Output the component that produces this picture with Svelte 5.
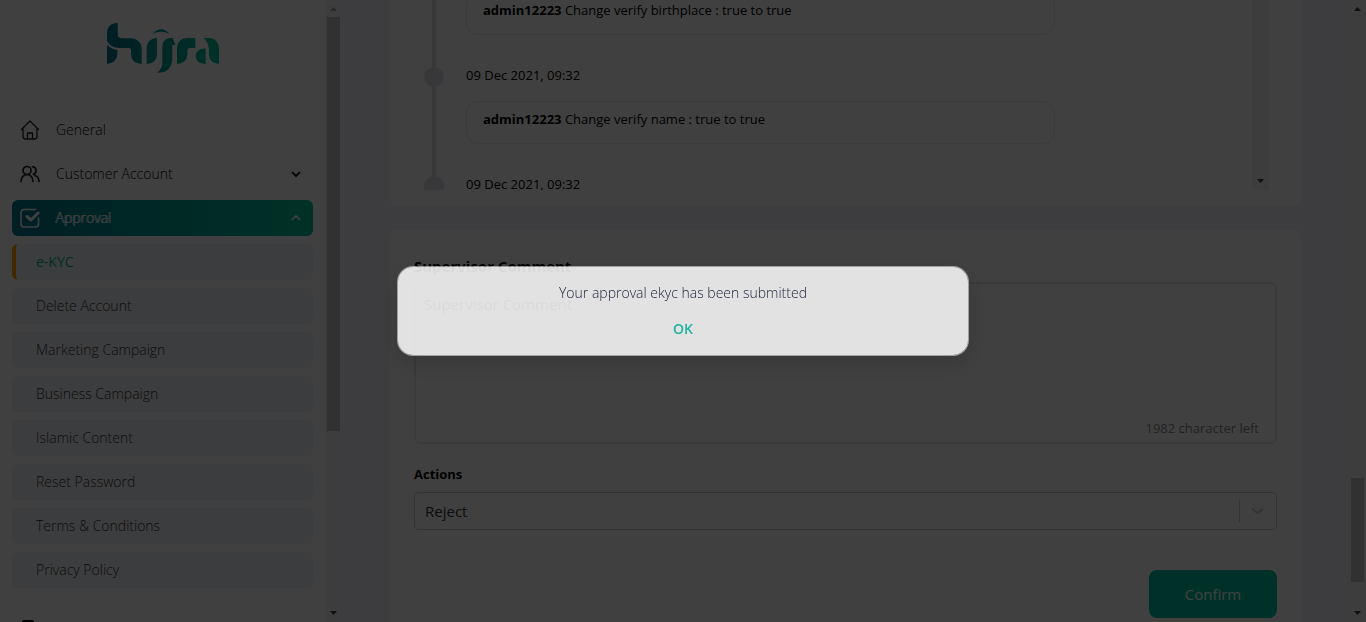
<script>
  const submenu = [
    'e-KYC',
    'Delete Account',
    'Marketing Campaign',
    'Business Campaign',
    'Islamic Content',
    'Reset Password',
    'Terms & Conditions',
    'Privacy Policy'
  ];
  const history = [
    { date: '09 Dec 2021, 09:32', user: 'admin12223', text: 'Change verify name : true to true' },
    { date: '09 Dec 2021, 09:32' }
  ];
  let comment = $state('Supervisor Comment');
  let action = $state('Reject');
  let open = $state(true);
  const left = $derived(2000 - comment.length);
</script>

{#snippet rail(before, size, atTop)}
  <div class="rail" aria-hidden="true">
    <svg class:dim={atTop} width="17" height="17" viewBox="0 0 17 17"><path d="M5 11h7L8.500 7z" /></svg>
    <div class="track">
      <div style="flex: {before} 0 0px"></div>
      <div class="thumb" style="flex: {size} 0 0px"></div>
      <div style="flex: {588 - before - size} 0 0px"></div>
    </div>
    <svg width="17" height="17" viewBox="0 0 17 17"><path d="M5 6h7l-3.500 4z" /></svg>
  </div>
{/snippet}

<div class="shell">
  <aside>
    <nav>
      <svg class="logo" width="112" height="50" viewBox="0 0 336 150" role="img" aria-label="hijra">
        <defs>
          <linearGradient id="brand" x1="0" y1="0" x2="336" y2="0" gradientUnits="userSpaceOnUse">
            <stop offset="0" stop-color="#00758c" />
            <stop offset="1" stop-color="#00c49a" />
          </linearGradient>
        </defs>
        <g fill="url(#brand)">
          <path d="M0 32Q0 0 32 0V34Q32 46 46 46H70Q104 48 104 80V123Q72 121 72 92V82Q72 75 64 75H38Q8 73 0 53Z" />
          <path d="M0 65Q10 77 31 81V94Q29 121 0 123Z" />
          <path d="M119 123V73Q121 47 150 45V95Q148 121 119 123Z" />
          <path d="M136 33Q162 4 188 33Q162 19 136 33Z" />
          <path d="M166 70Q167 46 190 45H197L205 66H196V110Q192 150 150 149Q166 139 166 118Z" />
          <path d="M210 123V73Q212 47 240 45H265V75H250Q241 75 241 84V95Q239 121 210 123Z" />
          <path d="M290 45H308Q335 48 336 78V123Q306 121 306 94V78Q303 57 290 45Z" />
          <path d="M296 76V123Q266 121 266 99Q267 78 296 76Z" />
        </g>
      </svg>

      <a class="item" href="#general">
        <svg width="20" height="20" viewBox="0 0 20 20" fill="none" stroke="currentColor" stroke-width="1.300" stroke-linejoin="round" stroke-linecap="round">
          <path d="M3 8v8.500a2.500 2.500 0 0 0 2.500 2.500h9a2.500 2.500 0 0 0 2.500-2.500V8M1.500 9.500 10 1l8.500 8.500M7.500 19v-6h5v6" />
        </svg>
        <span>General</span>
      </a>
      <a class="item" href="#customer">
        <svg width="20" height="20" viewBox="0 0 20 20" fill="none" stroke="currentColor" stroke-width="1.700" stroke-linecap="round">
          <circle cx="7" cy="6.500" r="4" />
          <path d="M1 17.500c0-4 2.500-7 6-7s6 3 6 7M12.500 2.600a4 4 0 0 1 1 7.700M15 11.500c2.500 1 4 3 4 6" />
        </svg>
        <span>Customer Account</span>
        <svg class="caret" width="10" height="8" viewBox="0 0 10 8" fill="none" stroke="currentColor" stroke-width="2"><path d="M1 2l4 4 4-4" /></svg>
      </a>
      <a class="item active" href="#approval">
        <svg width="20" height="20" viewBox="0 0 20 20" fill="none" stroke="currentColor" stroke-linecap="round" stroke-linejoin="round">
          <path stroke-width="1.600" d="M15.500 1.500H4A3 3 0 0 0 1 4.500v11.500a3 3 0 0 0 3 3h11.500a3 3 0 0 0 3-3V10" />
          <path stroke-width="3" d="M7 8.500l4 3.500 7-7" />
        </svg>
        <span>Approval</span>
        <svg class="caret" width="10" height="8" viewBox="0 0 10 8" fill="none" stroke="currentColor" stroke-width="1.600"><path d="M1 6l4-4 4 4" /></svg>
      </a>
      {#each submenu as name, i}
        <a class="sub" class:current={i === 0} href="#{i}">{name}</a>
      {/each}
      <a class="item next" href="#more" aria-label="More">
        <svg width="20" height="20" viewBox="0 0 20 20"><rect x="2" width="12" height="20" rx="2" /></svg>
      </a>
    </nav>
    {@render rail(0, 414, true)}
  </aside>

  <main>
    <section class="card log">
      <div class="timeline">
        <div class="bubble"><b>admin12223</b> Change verify birthplace : true to true</div>
        {#each history as h}
          <div class="entry">
            <i class="dot"></i>
            <time>{h.date}</time>
            {#if h.text}
              <div class="bubble"><b>{h.user}</b> {h.text}</div>
            {/if}
          </div>
        {/each}
      </div>
      <div class="rail" aria-hidden="true">
        <div class="track"></div>
        <svg width="17" height="17" viewBox="0 0 17 17"><path d="M5 6h7l-3.500 4z" /></svg>
      </div>
    </section>

    <section class="card form">
      <label class="title" for="comment">Supervisor Comment</label>
      <div class="box">
        <textarea id="comment" bind:value={comment}></textarea>
        <span class="count">{left} character left</span>
      </div>
      <label for="action">Actions</label>
      <div class="select">
        <select id="action" bind:value={action}>
          <option>Reject</option>
          <option>Approve</option>
        </select>
        <svg width="38" height="22" viewBox="0 0 38 22" fill="none" stroke="#ccc"><path d="M.500 0v22" /><path stroke-width="2" d="M13 8.500l5.500 5 5.500-5" /></svg>
      </div>
      <button class="confirm">Confirm</button>
    </section>
  </main>
  {@render rail(461, 104, false)}
</div>

{#if open}
  <div class="overlay">
    <div class="dialog" role="dialog" aria-modal="true" aria-labelledby="message">
      <p id="message">Your approval ekyc has been submitted</p>
      <button onclick={() => (open = false)}>OK</button>
    </div>
  </div>
{/if}

<style>
  :global(body) { margin: 0; overflow: hidden; }
  .shell, .overlay, .shell *, .overlay * { box-sizing: border-box; }
  .shell {
    display: flex;
    height: 100vh;
    overflow: hidden;
    background: #f4f4f9;
    font: 13px/20px "Open Sans", "Noto Sans", sans-serif;
    color: #000;
  }
  aside { display: flex; flex: 0 0 342px; background: #fff; }
  nav {
    flex: 1;
    display: flex;
    flex-direction: column;
    gap: 8px;
    padding: 23px 12px 0;
    overflow: hidden;
    font-size: 14px;
    font-weight: 300;
  }
  nav > * { flex-shrink: 0; }
  .logo { align-self: center; margin-bottom: 31px; }
  a { color: inherit; text-decoration: none; }
  .item {
    display: flex;
    align-items: center;
    gap: 16px;
    height: 36px;
    padding: 0 12px 0 8px;
    border-radius: 6px;
  }
  .item svg { color: #222; }
  .caret { margin-left: auto; }
  .active, .active svg { color: #fff; }
  .active {
    text-shadow: -1px 0 currentColor;
    background: linear-gradient(90deg, #00788f, #00c49a);
  }
  .sub {
    height: 36px;
    padding: 8px 24px;
    border-radius: 6px;
    background: #f0f2f5;
    color: #333;
  }
  .current {
    padding-left: 20px;
    border-left: 4px solid #ffa000;
    color: #00b894;
    font-weight: 400;
  }
  .next { margin-top: 16px; }

  .rail { display: flex; flex-direction: column; flex: 0 0 17px; background: #f1f1f1; }
  .rail svg { flex: none; fill: #404040; }
  .rail .dim { fill: #a3a3a3; }
  .track { flex: 1; display: flex; flex-direction: column; padding: 0 2px; }
  .thumb { background: #c1c1c1; }

  main {
    flex: 1;
    min-width: 0;
    display: flex;
    flex-direction: column;
    gap: 24px;
    padding: 0 48px;
    overflow: hidden;
  }
  .card { flex: none; background: #fff; border-radius: 8px; }
  .log {
    display: flex;
    justify-content: space-between;
    height: 206px;
    padding: 0 32px 16px;
    border-radius: 0 0 8px 8px;
  }
  .timeline {
    flex: 0 1 633px;
    display: flex;
    flex-direction: column;
    overflow: hidden;
    padding-left: 44px;
    background: linear-gradient(#dedeea, #dedeea) 10px 0 / 4px 100% no-repeat;
  }
  .timeline > .bubble { margin-top: -8px; }
  .bubble {
    flex: none;
    height: 43px;
    padding: 7px 16px;
    border: 1px solid #e6e6e6;
    border-radius: 12px;
  }
  .entry {
    flex: none;
    position: relative;
    display: flex;
    flex-direction: column;
    gap: 16px;
    padding-top: 30px;
  }
  .dot {
    position: absolute;
    left: -42px;
    top: 32px;
    width: 20px;
    height: 20px;
    border-radius: 50%;
    background: #dedeea;
  }

  .form { display: flex; flex-direction: column; min-height: 412px; padding: 24px; }
  label { font-weight: 700; margin-bottom: 8px; }
  .title { font-size: 15px; line-height: 24px; margin-bottom: 4px; }
  .box {
    display: flex;
    flex-direction: column;
    height: 162px;
    margin-bottom: 20px;
    padding: 8px 16px 4px 8px;
    border: 2px solid #e6e6e6;
    border-radius: 6px;
  }
  textarea {
    flex: 1;
    border: 0;
    padding: 0;
    resize: none;
    outline: 0;
    background: none;
    font: 15px/24px "Open Sans", sans-serif;
  }
  .count { align-self: flex-end; color: #8c8c8c; }
  .select { display: grid; align-items: center; margin-bottom: 40px; }
  .select > * { grid-area: 1 / 1; }
  .select svg { justify-self: end; pointer-events: none; }
  select {
    appearance: none;
    width: 100%;
    height: 38px;
    padding: 0 10px;
    border: 1px solid #ccc;
    border-radius: 4px;
    background: #fff;
    color: #333;
    font: 15px/24px "Open Sans", sans-serif;
  }
  .confirm {
    align-self: flex-end;
    width: 128px;
    height: 48px;
    border: 0;
    border-radius: 8px;
    background: #00c4a0;
    color: #fff;
    font: 15px/24px "Open Sans", sans-serif;
  }

  .overlay {
    position: fixed;
    inset: 0;
    display: grid;
    place-items: center;
    background: rgba(0, 0, 0, .75);
    font: 14px/20px "Open Sans", sans-serif;
  }
  .dialog {
    display: flex;
    flex-direction: column;
    align-items: center;
    gap: 16px;
    width: 572px;
    max-width: 92%;
    padding: 16px;
    border-radius: 16px;
    background: rgba(255, 255, 255, .85);
    background-clip: padding-box;
    border: 1px solid rgba(255, 255, 255, .5);
    box-shadow: 0 8px 24px rgba(0, 0, 0, .15);
  }
  p { margin: 0; color: #1a2138; font-weight: 300; }
  .dialog button {
    padding: 0;
    border: 0;
    background: none;
    color: #1fb5a0;
    font: 600 14px/20px "Open Sans", sans-serif;
  }
</style>
